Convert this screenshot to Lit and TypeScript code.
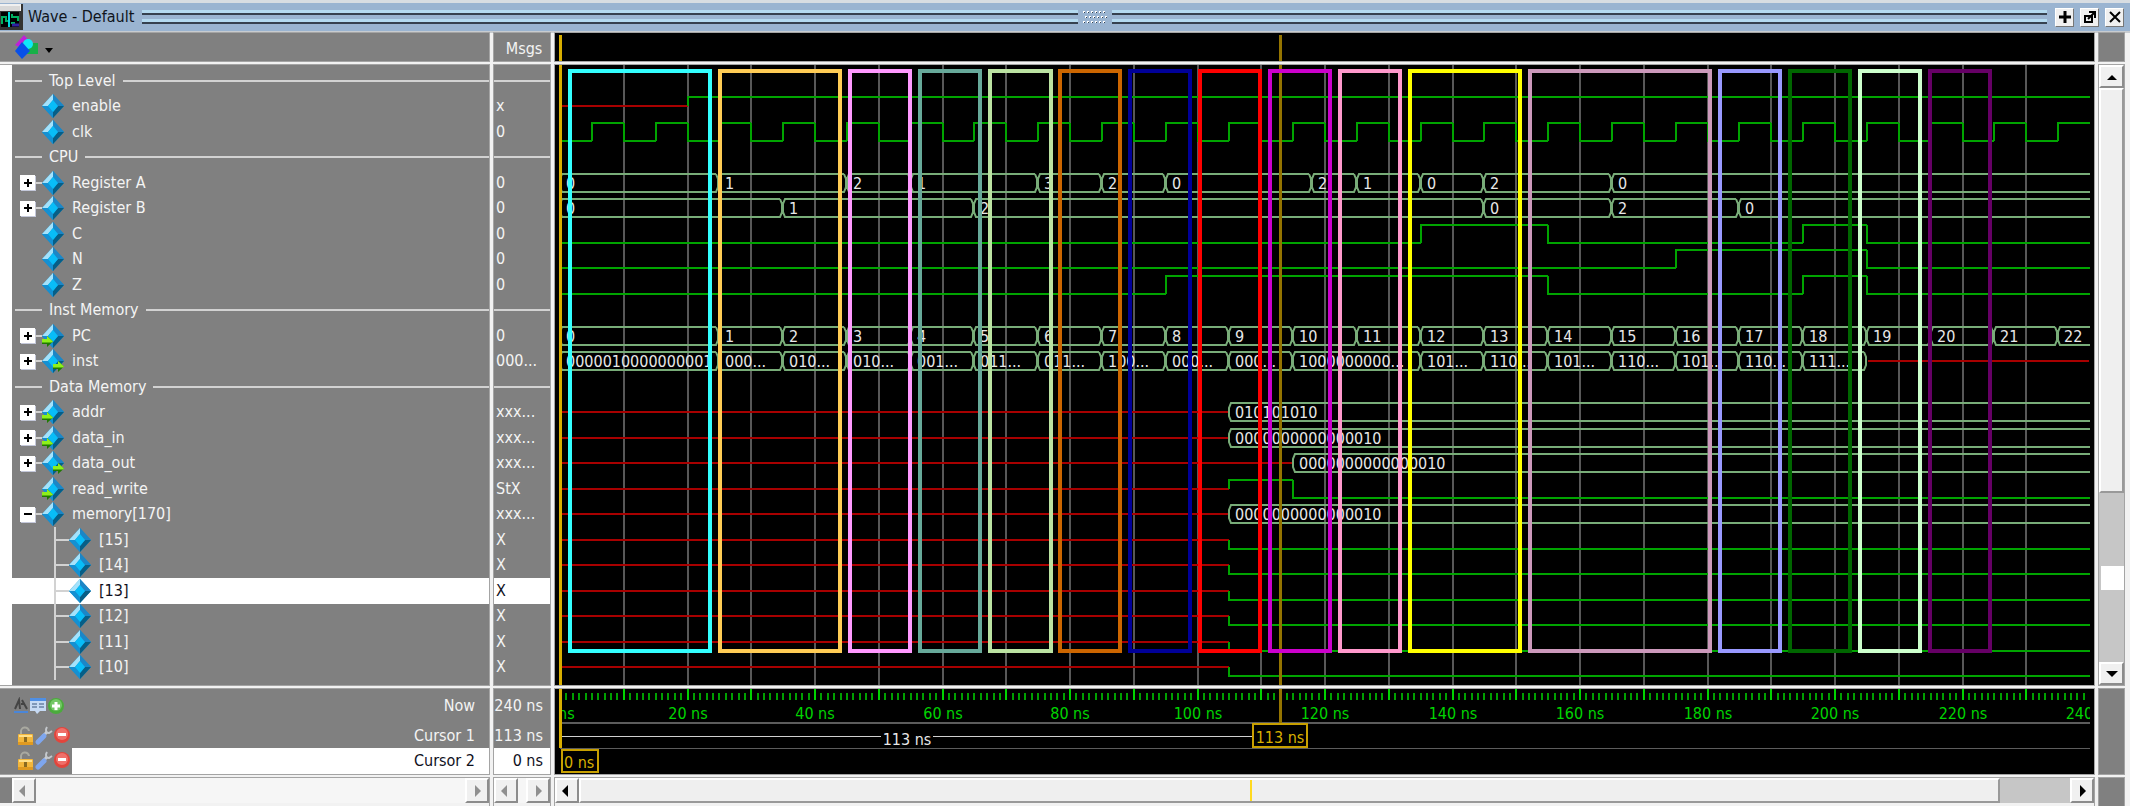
import { LitElement, html, svg, css, nothing } from "lit";
import { customElement, property, state } from "lit/decorators.js";
import { classMap } from "lit/directives/class-map.js";

type Port = "none" | "in" | "out";
type Change = [number, string];

interface Row {
  name: string;
  msg?: string;
  group?: boolean;
  port?: Port;
  toggle?: "+" | "-";
  child?: boolean;
  selected?: boolean;
  /** Single-bit trace: [time, level], where the level is 0, 1 or x. */
  bit?: Change[];
  /** Vector trace: [time, label], where the label x is unknown. */
  bus?: Change[];
}

const END = 240;

const clock: Change[] = [[0, "0"]];
for (let t = 5; t < END; t += 5) clock.push([t, t % 10 === 5 ? "1" : "0"]);

const pc: Change[] = [[0, "0"]];
for (let i = 1; i <= 22; i++) pc.push([15 + 10 * i, String(i)]);

const settled: Change[] = [[0, "x"], [105, "0"]];
const word = "0000000000000010";

const ROWS: Row[] = [
  { name: "Top Level", group: true },
  { name: "enable", msg: "x", bit: [[0, "x"], [20, "1"]] },
  { name: "clk", msg: "0", bit: clock },
  { name: "CPU", group: true },
  { name: "Register A", msg: "0", toggle: "+", bus: [[0, "0"], [25, "1"], [45, "2"], [55, "1"], [75, "3"], [85, "2"], [95, "0"], [118, "2"], [125, "1"], [135, "0"], [145, "2"], [165, "0"]] },
  { name: "Register B", msg: "0", toggle: "+", bus: [[0, "0"], [35, "1"], [65, "2"], [145, "0"], [165, "2"], [185, "0"]] },
  { name: "C", msg: "0", bit: [[0, "0"], [135, "1"], [155, "0"], [195, "1"], [205, "0"]] },
  { name: "N", msg: "0", bit: [[0, "0"], [175, "1"], [205, "0"]] },
  { name: "Z", msg: "0", bit: [[0, "0"], [95, "1"], [155, "0"], [195, "1"], [205, "0"]] },
  { name: "Inst Memory", group: true },
  { name: "PC", msg: "0", toggle: "+", port: "in", bus: pc },
  {
    name: "inst", msg: "000...", toggle: "+", port: "out",
    bus: [[0, "0000010000000001"], [25, "000..."], [35, "010..."], [45, "010..."], [55, "001..."], [65, "011..."], [75, "011..."], [85, "100..."], [95, "000..."], [105, "000..."], [115, "1000000000..."], [135, "101..."], [145, "110..."], [155, "101..."], [165, "110..."], [175, "101..."], [185, "110..."], [195, "111..."], [205, "x"]],
  },
  { name: "Data Memory", group: true },
  { name: "addr", msg: "xxx...", toggle: "+", port: "in", bus: [[0, "x"], [105, "010101010"]] },
  { name: "data_in", msg: "xxx...", toggle: "+", port: "in", bus: [[0, "x"], [105, word]] },
  { name: "data_out", msg: "xxx...", toggle: "+", port: "out", bus: [[0, "x"], [115, word]] },
  { name: "read_write", msg: "StX", port: "in", bit: [[0, "x"], [105, "1"], [115, "0"]] },
  { name: "memory[170]", msg: "xxx...", toggle: "-", bus: [[0, "x"], [105, word]] },
  ...[15, 14, 13, 12, 11, 10].map((n) => ({
    name: `[${n}]`, msg: "X", child: true, selected: n === 13, bit: settled,
  })),
];

/** Highlight frames: start time, end time, colour. */
const FRAMES: [number, number, string][] = [
  [1.27, 23.89, "#33ffff"],
  [24.8, 44.31, "#ffcc55"],
  [45.2, 55.28, "#ff99ff"],
  [56.13, 66.26, "#67a99a"],
  [67.11, 77.26, "#bbe3a2"],
  [78.09, 88.17, "#cc6600"],
  [89.13, 99.14, "#000099"],
  [100.03, 110.12, "#ff0000"],
  [111.07, 121.03, "#cc00cc"],
  [122.07, 132.09, "#ff99cc"],
  [133.05, 150.93, "#ffff00"],
  [151.84, 180.69, "#cc99bb"],
  [181.57, 191.72, "#9999ff"],
  [192.6, 202.63, "#006600"],
  [203.58, 213.68, "#ccffcc"],
  [214.55, 224.59, "#660066"],
];

const diamond = (port: Port) => html`
  <svg class="gem" width="22" height="24" viewBox="0 0 22 24" aria-hidden="true">
    <path d="M11 0 22 12 11 24 0 12Z" fill="#0e8fd0" />
    <path d="M11 0 0 12 6 12 11 6Z" fill="#a4e2fb" />
    <path d="M11 0 22 12 16 12 11 6Z" fill="#1c86c6" />
    <path d="M0 12 11 24 11 18 6 12Z" fill="#1590d2" />
    <path d="M22 12 11 24 11 18 16 12Z" fill="#075e86" />
    <path d="M11 6 16 12 11 18 6 12Z" fill="#08bdf8" />
    ${port === "none" ? nothing : svg`
      <g transform=${port === "in" ? "translate(0 12)" : "translate(11 12)"}>
        <path d="M0 3H5V0L11 5.500 5 11V8H0Z" fill="#1f7a00" />
        <path d="M0 3H5V0L11 5.500 10 6.500H0Z" fill="#8ef01c" />
      </g>`}
  </svg>`;

const arrow = (dir: "left" | "right" | "up" | "down") => {
  const d = {
    left: "M8 1V13L2 7Z", right: "M5 1V13L11 7Z", up: "M2 10H12L7 5Z", down: "M1 4H13L7 10Z",
  }[dir];
  return html`<svg width="14" height="14" viewBox="0 0 14 14" aria-hidden="true"><path d=${d} fill="currentColor" /></svg>`;
};

const FONT = css`"DejaVu Sans Condensed", "DejaVu Sans", "Noto Sans", sans-serif`;

@customElement("wave-scrollbar")
export class WaveScrollbar extends LitElement {
  @property() label = "";
  @property({ type: Boolean, reflect: true }) vertical = false;
  @property({ type: Boolean, reflect: true }) disabled = false;
  @property({ type: Number }) extent = 0;
  @property({ type: Number }) mark = -1;

  static styles = css`
    :host { display: flex; min-width: 0; min-height: 0; background: #f6f6f6; }
    :host([vertical]) { flex-direction: column; }
    button {
      flex: none; width: 24px; padding: 0; border: 2px solid; border-color: #fff #8c8c8c #8c8c8c #fff;
      background: #f0f0f0; color: #000; display: grid; place-items: center;
    }
    :host([vertical]) button { width: auto; height: 23px; }
    :host([disabled]) button { color: #8f8f8f; }
    .track { flex: 1; min-width: 0; min-height: 0; position: relative; background: #c6c6c6; }
    :host([disabled]) .track { background: #f6f6f6; }
    .thumb { box-sizing: border-box; border: 2px solid; border-color: #fff #999 #999 #fff; background: #efefef; }
    .mark { position: absolute; top: 2px; bottom: 2px; width: 2px; background: #ffd91f; }
    :host([vertical]) .mark { width: auto; left: 2px; right: 0; top: auto; height: 24px; background: #fff; }
  `;

  render() {
    const v = this.vertical;
    const size = `${this.extent}%`;
    return html`
      <button ?disabled=${this.disabled} aria-label="${this.label} ${v ? "up" : "left"}">${arrow(v ? "up" : "left")}</button>
      <div class="track">
        ${this.extent ? html`<div class="thumb" style=${v ? `height:${size}` : `width:${size};height:100%`}></div>` : nothing}
        ${this.mark >= 0 ? html`<div class="mark" style=${v ? `top:${this.mark}%` : `left:${this.mark}%`}></div>` : nothing}
      </div>
      <button ?disabled=${this.disabled} aria-label="${this.label} ${v ? "down" : "right"}">${arrow(v ? "down" : "right")}</button>`;
  }
}

@customElement("app-root")
export class AppRoot extends LitElement {
  @state() private w = 0;
  @state() private h = 0;
  private observer?: ResizeObserver;

  static styles = css`
    :host {
      display: flex; flex-direction: column; height: 100vh; overflow: hidden;
      background: #f2f2f2; color: #f4f4f4; font: 16px/20px ${FONT};
    }
    button { font: inherit; }
    ul { list-style: none; margin: 0; padding: 0; }

    .title {
      flex: none; height: 28px; display: flex; align-items: center; gap: 8px; padding-right: 6px;
      background: #9ab4d1; color: #10141c; border-top: 3px solid #d8dde2; border-bottom: 2px solid #c8ccd0;
    }
    .title h1 { margin: 0; font: inherit; white-space: nowrap; }
    .app-icon { flex: none; margin-right: -3px; }
    .grip { flex: 1; display: flex; align-items: center; gap: 3px; height: 12px; }
    .rails { flex: 1; display: grid; gap: 4px; }
    .rails i { height: 3px; background: #b4daf0; border-bottom: 2px solid #36414f; }
    .tools { display: flex; gap: 6px; }
    .tools button {
      width: 19px; height: 19px; padding: 0; border: 1px solid; border-color: #fff #777 #777 #fff;
      background: #f0f0f0; display: grid; place-items: center;
    }

    .panes {
      flex: 1; min-height: 0; display: grid; gap: 4px 5px; padding-right: 6px;
      grid-template-columns: 489px 56px minmax(0, 1fr) 25px;
      grid-template-rows: 28px minmax(0, 1fr) 85px 28px;
    }
    .pane { min-width: 0; min-height: 0; overflow: hidden; background: #808080; box-shadow: 0 0 0 1px #a4a4a4; }
    .black { background: #000; }

    .head { display: flex; align-items: center; }
    .head button {
      display: flex; align-items: center; gap: 6px; padding: 0 0 0 14px; border: 0; background: none;
    }
    .msgs { justify-content: center; padding: 4px 0 0 4px; }

    .list {
      box-sizing: border-box; display: grid; grid-template-rows: repeat(24, minmax(0, 1fr));
      padding: 3px 0 5px; height: 100%;
    }
    .names { border-left: 12px solid #fff; }
    .row { display: flex; align-items: center; min-height: 0; white-space: nowrap; }
    .names .row { padding-left: 8px; }
    .names .group { gap: 7px; padding-left: 3px; }
    .rule { flex: none; height: 2px; background: #d2d2d2; width: 27px; }
    .rule.long { flex: 1; width: auto; }
    .toggle {
      width: 15px; height: 15px; padding: 0; border: 0; background: #fff;
      box-shadow: 1px 1px 0 #c4c8da; display: grid; place-items: center;
    }
    .slot { width: 15px; }
    .link { width: 7px; height: 2px; background: #d2d2d2; }
    .link.none { background: none; }
    .gem { flex: none; margin-right: 8px; }
    .stem { align-self: stretch; width: 2px; margin-left: 34px; background: #d2d2d2; }
    .branch { width: 13px; height: 2px; background: #d2d2d2; }
    .selected { background: #fff; color: #10101c; }
    .names .selected { margin-left: -12px; padding-left: 20px; }
    .values .row { padding-left: 2px; }
    .values .group { padding-left: 0; }

    .cursors { display: grid; grid-template-rows: 34px 25px 26px; height: 100%; }
    .cursor { display: flex; align-items: center; min-width: 0; white-space: nowrap; }
    .cursor .icons { flex: none; width: 56px; padding-left: 16px; display: flex; align-items: center; }
    .cursor .icons.wide { padding-left: 13px; width: 59px; }
    .icons button { padding: 0; border: 0; background: none; display: grid; }
    .cursor .text {
      box-sizing: border-box; flex: 1; min-width: 0; height: 100%; padding-right: 14px;
      display: flex; align-items: center; justify-content: flex-end; overflow: hidden;
    }
    .times .text { padding-right: 7px; }
    .cursor .active { background: #fff; color: #10101c; }

    .hbar { display: flex; padding: 0 0 3px; background: #f2f2f2; }
    .hbar wave-scrollbar { flex: 1; }
    .corner { flex: none; width: 12px; background: #808080; }
    .vbar { display: flex; }
    .vbar wave-scrollbar { flex: 1; }

    .plot { display: block; width: 100%; height: 100%; }
    .grid { stroke: #585858; }
    .hi { stroke: #00a400; }
    .bad { stroke: #a80000; }
    .bus { stroke: #78ac78; }
    .hi, .bad, .bus, .frame { fill: none; stroke-width: 2; }
    .grid { stroke-width: 2; }
    .frame { stroke-width: 4; }
    .c2 { fill: #d8ae00; }
    .c1 { fill: #947400; }
    text { fill: #e8e8e8; font-size: 16px; }
    .tick { fill: #00d400; }
    .minor { fill: #00a000; }
    .line { fill: #5c5c5c; }
    .span { fill: #d0d0d0; }
    .flag { fill: #000; stroke: #c8a000; stroke-width: 2; }
    .flagtext { fill: #d8b000; }
    .mid { text-anchor: middle; }
  `;

  firstUpdated() {
    const el = this.renderRoot.querySelector(".waves") as HTMLElement;
    const measure = () => {
      this.w = el.clientWidth;
      this.h = el.clientHeight;
    };
    this.observer = new ResizeObserver(measure);
    this.observer.observe(el);
    measure();
  }

  disconnectedCallback() {
    super.disconnectedCallback();
    this.observer?.disconnect();
  }

  private get right() { return this.w - 4; }

  private x(t: number) { return Math.round(5 + (t / END) * (this.right - 5)); }

  private bitTrace(changes: Change[], y: number) {
    const level = (v: string) => (v === "1" ? y - 8 : v === "0" ? y + 10 : y + 1);
    let good = "";
    let bad = "";
    changes.forEach(([t, v], i) => {
      const x0 = this.x(t);
      const next = changes[i + 1];
      const x1 = next ? this.x(next[0]) : this.right;
      if (v === "x") bad += `M${x0} ${level(v)}H${x1}`;
      else good += `${i ? `M${x0} ${level(changes[i - 1][1])}V${level(v)}` : `M${x0} ${level(v)}`}H${x1}`;
    });
    return svg`<path class="bad" d=${bad} /><path class="hi" d=${good} />`;
  }

  private busTrace(changes: Change[], y: number) {
    const top = y - 8;
    const bot = y + 10;
    let good = "";
    let bad = "";
    changes.forEach(([t, v], i) => {
      const x0 = this.x(t);
      const next = changes[i + 1];
      const x1 = next ? this.x(next[0]) : this.right;
      if (v === "x") {
        bad += `M${x0 + (i ? 1 : 0)} ${y + 1}H${x1 - 1}`;
        return;
      }
      const end = next ? x1 - 3 : x1;
      good += `M${end} ${top}H${x0 + 2}L${x0} ${top + 5}V${bot - 5}L${x0 + 2} ${bot}H${end}`;
      if (next) good += `L${x1 - 1} ${bot - 5}V${top + 5}L${end} ${top}`;
    });
    return svg`
      <path class="bad" d=${bad} /><path class="bus" d=${good} />
      ${changes.map(([t, v]) => v === "x" ? nothing : svg`<text x=${this.x(t) + 6} y=${y + 7}>${v}</text>`)}`;
  }

  private renderWaves() {
    if (!this.w) return nothing;
    const pitch = (this.h - 8) / 24;
    const tens = Array.from({ length: 23 }, (_, i) => (i + 1) * 10);
    return html`<svg class="plot" role="img" aria-label="Waveforms">
      ${tens.map((t) => svg`<line class="grid" x1=${this.x(t)} x2=${this.x(t)} y1="0" y2=${this.h} />`)}
      ${ROWS.map((r, i) => {
        const y = Math.round(2 + pitch * (i + 0.5));
        return r.bit ? this.bitTrace(r.bit, y) : r.bus ? this.busTrace(r.bus, y) : nothing;
      })}
      <rect class="c2" x="4" y="0" width="3" height=${this.h} />
      <rect class="c1" x=${this.x(113) - 1} y="0" width="3" height=${this.h} />
      ${FRAMES.map(([a, b, c]) => svg`<rect class="frame" stroke=${c} x=${this.x(a) + 2} y="6"
        width=${this.x(b) - this.x(a) - 4} height=${this.h - 40} />`)}
    </svg>`;
  }

  private renderRuler() {
    if (!this.w) return nothing;
    const ticks = Array.from({ length: END - 1 }, (_, i) => i + 1);
    const labels = Array.from({ length: 12 }, (_, i) => (i + 1) * 20);
    const c1 = this.x(113);
    const mid = Math.round((c1 - 22) / 2);
    return html`<svg class="plot" role="img" aria-label="Time ruler">
      ${ticks.map((t) => t % 10
        ? svg`<rect class="minor" x=${this.x(t) - 1} y="4" width="2" height="7" />`
        : svg`<rect class="tick" x=${this.x(t) - 1} y="0" width="2" height="11" />`)}
      <text class="tick" x="3" y="30">ns</text>
      ${labels.map((t) => svg`<text class="tick mid" x=${this.x(t)} y="30">${t} ns</text>`)}
      <rect x=${this.right} y="0" width="4" height="34" />
      <rect class="line" x="5" y="33" width=${this.right - 5} height="2" />
      <rect class="line" x="5" y="59" width=${this.right - 5} height="1" />
      <rect class="span" x="5" y="47" width=${mid - 31} height="1" />
      <text class="mid" x=${mid} y="56">113 ns</text>
      <rect class="span" x=${mid + 26} y="47" width=${c1 - mid - 50} height="1" />
      <rect class="c2" x="4" y="0" width="3" height="59" />
      <rect class="c1" x=${c1 - 1} y="0" width="3" height="34" />
      <rect class="flag" x=${c1 - 27} y="35" width="54" height="23" />
      <text class="flagtext mid" x=${c1} y="54">113 ns</text>
      <rect class="flag" x="7" y="61" width="36" height="22" />
      <text class="flagtext" x="9" y="79">0 ns</text>
    </svg>`;
  }

  private renderName(r: Row) {
    if (r.group) {
      return html`<li class="row group"><span class="rule"></span>${r.name}<span class="rule long"></span></li>`;
    }
    if (r.child) {
      return html`<li class=${classMap({ row: true, selected: !!r.selected })}>
        <span class="stem"></span><span class="branch"></span>${diamond("none")}<span>${r.name}</span></li>`;
    }
    return html`<li class="row">
      ${r.toggle
        ? html`<button class="toggle" aria-label="${r.toggle === "+" ? "Expand" : "Collapse"} ${r.name}">
            <svg width="8" height="8" viewBox="0 0 8 8" aria-hidden="true">
              <path d=${r.toggle === "+" ? "M0 4H8M4 0V8" : "M0 4H8"} stroke="#000" stroke-width="2" />
            </svg></button><span class="link"></span>`
        : html`<span class="slot"></span><span class="link none"></span>`}
      ${diamond(r.port ?? "none")}<span>${r.name}</span></li>`;
  }

  private renderTools() {
    return html`<span class="icons">
      <button aria-label="Lock cursor"><svg width="18" height="22" viewBox="0 0 18 22" aria-hidden="true">
        <path d="M5 10V7a4 4 0 0 1 8-1" fill="none" stroke="#a9a9a0" stroke-width="2" />
        <rect x="2" y="9" width="15" height="11" rx="1" fill="#f3b73c" />
        <path d="M3 10H16V12H3Z" fill="#ffe08a" /><path d="M2 17H17V20H2Z" fill="#e09a20" />
        <rect x="8" y="12" width="3" height="5" fill="#8a6a20" />
      </svg></button>
      <button aria-label="Edit cursor"><svg width="19" height="22" viewBox="0 0 19 22" aria-hidden="true">
        <path d="M9 11 13 7" stroke="#c9cdd2" stroke-width="3" />
        <path d="M13 2C11 5 12 8 15 8L18 6" fill="none" stroke="#c4c8cc" stroke-width="2" />
        <path d="M4 17 10 11" stroke="#7ea6ee" stroke-width="5" stroke-linecap="round" />
      </svg></button>
      <button aria-label="Delete cursor"><svg width="17" height="22" viewBox="0 0 17 22" aria-hidden="true">
        <circle cx="9" cy="10" r="8" fill="#e2453c" /><circle cx="9" cy="9" r="6" fill="#f0706a" />
        <rect x="5" y="8" width="8" height="3" fill="#fff" />
      </svg></button></span>`;
  }

  render() {
    return html`
      <header class="title">
        <svg class="app-icon" width="23" height="26" viewBox="0 0 23 26" aria-hidden="true">
          <rect width="23" height="26" fill="#333" /><rect width="21" height="7" fill="#f0f0f0" />
          <rect width="20" height="5" y="2" fill="#d8d8d8" /><rect x="1" y="8" width="18" height="15" fill="#000" />
          <path d="M2 20V13H6V17H9V10M12 10V13H18V17M11 19H15" fill="none" stroke="#00b060" stroke-width="2" />
          <path d="M9 8V23" stroke="#00d8e0" stroke-width="2" /><path d="M12 21H19" stroke="#3020a0" stroke-width="3" />
        </svg>
        <h1>Wave - Default</h1>
        <div class="grip">
          <div class="rails"><i></i><i></i></div>
          <svg width="28" height="14" viewBox="0 0 28 14" aria-hidden="true">
            ${[0, 1, 2].map((r) => [0, 1, 2, 3, 4, 5].map((c) => svg`
              <rect x=${2 + c * 4 + (r % 2) * 2} y=${1 + r * 5} width="2" height="2" fill="#fff" />
              <rect x=${3 + c * 4 + (r % 2) * 2} y=${2 + r * 5} width="1" height="1" fill="#36414f" />`))}
          </svg>
          <div class="rails"><i></i><i></i></div>
        </div>
        <div class="tools">
          <button aria-label="Zoom pane"><svg width="14" height="14" viewBox="0 0 14 14" aria-hidden="true"><path d="M1 7H13M7 1V13" stroke="#000" stroke-width="3" /></svg></button>
          <button aria-label="Undock"><svg width="14" height="14" viewBox="0 0 14 14" aria-hidden="true">
            <path d="M2 6H9V12H2Z" fill="none" stroke="#000" stroke-width="2" /><path d="M5 9 11 3M6 2H12V8" fill="none" stroke="#000" stroke-width="2" /></svg></button>
          <button aria-label="Close"><svg width="14" height="14" viewBox="0 0 14 14" aria-hidden="true"><path d="M2 2 12 12M12 2 2 12" stroke="#000" stroke-width="2" /></svg></button>
        </div>
      </header>
      <main class="panes">
        <div class="pane head">
          <button aria-label="Signal filter">
            <svg width="25" height="26" viewBox="0 0 25 26" aria-hidden="true">
              <path d="M1 11 10 1 19 11 14 13H5Z" fill="#c020d8" /><path d="M7 10 11 6 14 9 10 11Z" fill="#808080" />
              <path d="M15 9H24V20H10Z" fill="#18b048" /><circle cx="14" cy="10" r="5" fill="#10e8f8" />
              <path d="M8 8 16 17 8 25 1 17Z" fill="#0850e8" />
            </svg>
            <svg width="8" height="12" viewBox="0 0 8 12" aria-hidden="true"><path d="M0 7H8L4 12Z" fill="#000" /></svg>
          </button>
        </div>
        <div class="pane head msgs">Msgs</div>
        <div class="pane black">${this.w ? html`<svg class="plot" aria-hidden="true">
          <rect class="c2" x="4" y="2" width="3" height="26" />
          <rect class="c1" x=${this.x(113) - 1} y="2" width="3" height="26" /></svg>` : nothing}</div>
        <div class="pane"></div>

        <div class="pane"><ul class="list names">${ROWS.map((r) => this.renderName(r))}</ul></div>
        <div class="pane"><ul class="list values">${ROWS.map((r) => html`
          <li class=${classMap({ row: true, group: !!r.group, selected: !!r.selected })}>
            ${r.group ? html`<span class="rule long"></span>` : r.msg}</li>`)}</ul></div>
        <div class="pane black waves">${this.renderWaves()}</div>
        <div class="pane vbar"><wave-scrollbar vertical label="Scroll" .extent=${70.5} .mark=${83.2}></wave-scrollbar></div>

        <div class="pane cursors">
          <div class="cursor"><span class="icons wide">
            <button aria-label="Time grid"><svg width="16" height="18" viewBox="0 0 16 18" aria-hidden="true">
              <path d="M2 12 6 3 7 12M9 3 14 12M8 7H12" fill="none" stroke="#444" stroke-width="2" /><path d="M1 15H15" stroke="#4a86d8" stroke-width="2" /></svg></button>
            <button aria-label="Cursor properties"><svg width="18" height="18" viewBox="0 0 18 18" aria-hidden="true">
              <path d="M1 1H17V14H11L8 17 6 14H1Z" fill="#c6daf4" /><path d="M1 1H17V4H1Z" fill="#4f8fe4" />
              <path d="M3 7H8M10 7H15M3 10H8M10 10H15" stroke="#8098b8" stroke-width="2" /></svg></button>
            <button aria-label="Add cursor"><svg width="18" height="18" viewBox="0 0 18 18" aria-hidden="true">
              <circle cx="9" cy="9" r="8" fill="#4bab3c" /><circle cx="9" cy="8" r="6" fill="#74c766" /><path d="M5 9H13M9 5V13" stroke="#fff" stroke-width="3" /></svg></button>
          </span><span class="text">Now</span></div>
          <div class="cursor">${this.renderTools()}<span class="text">Cursor 1</span></div>
          <div class="cursor">${this.renderTools()}<span class="text active">Cursor 2</span></div>
        </div>
        <div class="pane cursors times">
          <div class="cursor"><span class="text">240 ns</span></div>
          <div class="cursor"><span class="text">113 ns</span></div>
          <div class="cursor"><span class="text active">0 ns</span></div>
        </div>
        <div class="pane black">${this.renderRuler()}</div>
        <div class="pane"></div>

        <div class="pane hbar"><span class="corner"></span><wave-scrollbar disabled label="Scroll names"></wave-scrollbar></div>
        <div class="pane hbar"><wave-scrollbar disabled label="Scroll values"></wave-scrollbar></div>
        <div class="pane hbar"><wave-scrollbar label="Scroll time" .extent=${95.3} .mark=${45}></wave-scrollbar></div>
        <div class="pane"></div>
      </main>`;
  }
}
